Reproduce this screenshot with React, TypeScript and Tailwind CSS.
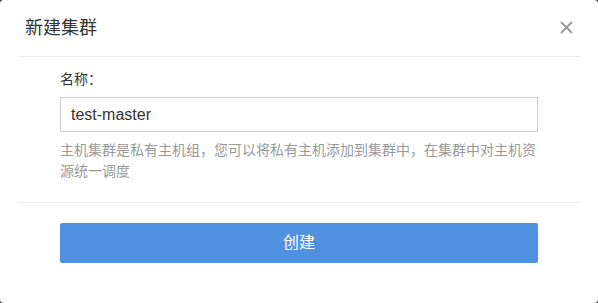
export default function App() {
  return (
    <div className="h-[303px] w-[598px] bg-[#4a4a4a]">
      <div
        className="flex h-full w-full flex-col rounded-[4px] bg-white"
        style={{ fontFamily: '"Liberation Sans", "Noto Sans CJK SC", sans-serif' }}
      >
        {/* Header */}
        <div className="flex h-[56px] items-center justify-between pl-[25px] pr-[25px]">
          <span className="text-[18px] leading-none text-[#333]">新建集群</span>
          <button type="button" className="mb-[1px] flex h-[14px] w-[14px] items-center justify-center">
            <svg width="13" height="13" viewBox="0 0 13 13">
              <path d="M1 1 L12 12 M12 1 L1 12" stroke="#999" strokeWidth="1.8" />
            </svg>
          </button>
        </div>
        <div className="mx-[18px] h-px bg-[#ebebeb]" />

        {/* Body */}
        <div className="flex flex-col px-[60px] pt-[12px]">
          <label className="text-[14px] leading-[20px] text-[#333]">名称：</label>
          <div className="mt-[8px] flex h-[35px] items-center border border-[#ccc] px-[10px]">
            <span className="text-[16px] text-[#333]">test-master</span>
          </div>
          <p className="mt-[8px] text-[14px] leading-[21px] text-[#999]">
            主机集群是私有主机组，您可以将私有主机添加到集群中，在集群中对主机资源统一调度
          </p>
        </div>
        <div className="mx-[18px] mt-[20px] h-px bg-[#ebebeb]" />

        {/* Footer */}
        <div className="px-[60px] pt-[20px]">
          <button
            type="button"
            className="flex h-[40px] w-full items-center justify-center rounded-[2px] bg-[#4f91de] text-[16px] text-white"
          >
            创建
          </button>
        </div>
      </div>
    </div>
  );
}
